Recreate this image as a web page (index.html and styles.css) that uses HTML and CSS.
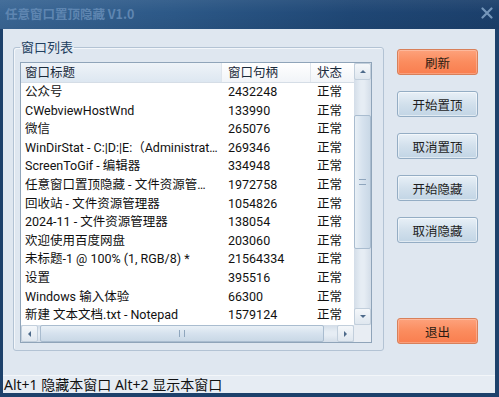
FILE: index.html
```html
<!doctype html>
<html lang="zh-CN">
  <head>
    <meta charset="UTF-8" />
    <title>任意窗口置顶隐藏 V1.0</title>
    <link rel="stylesheet" href="styles.css">
  </head>
  <body>
    <div class="window">
      <div class="titlebar">
        <span class="title">任意窗口置顶隐藏 V1.0</span>
        <svg class="close" width="12" height="12" viewBox="0 0 12 12">
          <path d="M1.5 1.5 L10.5 10.5 M10.5 1.5 L1.5 10.5" stroke="#7596ba" stroke-width="2.2" stroke-linecap="round" />
        </svg>
      </div>

      <div class="client">
        <fieldset class="group">
          <legend>窗口列表</legend>
          <div class="listview">
            <div class="list-main">
              <div class="row header">
                <span class="c1 sorted">窗口标题</span>
                <span class="c2">窗口句柄</span>
                <span class="c3">状态</span>
              </div>
              <div class="row"><span class="c1">公众号</span><span class="c2">2432248</span><span class="c3">正常</span></div>
              <div class="row"><span class="c1">CWebviewHostWnd</span><span class="c2">133990</span><span class="c3">正常</span></div>
              <div class="row"><span class="c1">微信</span><span class="c2">265076</span><span class="c3">正常</span></div>
              <div class="row"><span class="c1">WinDirStat - C:|D:|E:（Administrator）</span><span class="c2">269346</span><span class="c3">正常</span></div>
              <div class="row"><span class="c1">ScreenToGif - 编辑器</span><span class="c2">334948</span><span class="c3">正常</span></div>
              <div class="row"><span class="c1">任意窗口置顶隐藏 - 文件资源管理器</span><span class="c2">1972758</span><span class="c3">正常</span></div>
              <div class="row"><span class="c1">回收站 - 文件资源管理器</span><span class="c2">1054826</span><span class="c3">正常</span></div>
              <div class="row"><span class="c1">2024-11 - 文件资源管理器</span><span class="c2">138054</span><span class="c3">正常</span></div>
              <div class="row"><span class="c1">欢迎使用百度网盘</span><span class="c2">203060</span><span class="c3">正常</span></div>
              <div class="row"><span class="c1">未标题-1 @ 100% (1, RGB/8) *</span><span class="c2">21564334</span><span class="c3">正常</span></div>
              <div class="row"><span class="c1">设置</span><span class="c2">395516</span><span class="c3">正常</span></div>
              <div class="row"><span class="c1">Windows 输入体验</span><span class="c2">66300</span><span class="c3">正常</span></div>
              <div class="row"><span class="c1">新建 文本文档.txt - Notepad</span><span class="c2">1579124</span><span class="c3">正常</span></div>
            </div>

            <div class="vscroll">
              <div class="sbtn"><span class="arrow up"></span></div>
              <div class="track">
                <div class="thumb vthumb"><span class="grip"></span></div>
              </div>
              <div class="sbtn"><span class="arrow down"></span></div>
            </div>

            <div class="hscroll">
              <div class="sbtn"><span class="arrow left"></span></div>
              <div class="track">
                <div class="thumb hthumb"><span class="grip"></span></div>
              </div>
              <div class="sbtn"><span class="arrow right"></span></div>
            </div>
            <div class="corner"></div>
          </div>
        </fieldset>

        <div class="actions">
          <button class="btn orange">刷新</button>
          <button class="btn">开始置顶</button>
          <button class="btn">取消置顶</button>
          <button class="btn">开始隐藏</button>
          <button class="btn">取消隐藏</button>
          <button class="btn orange exit">退出</button>
        </div>
      </div>

      <div class="statusbar">Alt+1 隐藏本窗口 Alt+2 显示本窗口</div>
    </div>
  </body>
</html>
```

FILE: styles.css
```css
body {
  margin: 0;
  padding: 0;
  font-family: "Noto Sans CJK SC", sans-serif;
  font-size: 13px;
  color: #111;
}

.window {
  width: 499px;
  height: 397px;
  background: #1d416b;
  display: flex;
  flex-direction: column;
  overflow: hidden;
}

.titlebar {
  height: 29px;
  flex: none;
  display: flex;
  align-items: center;
  justify-content: space-between;
  padding: 0 6px 0 5px;
  box-sizing: border-box;
  background:
    linear-gradient(to bottom, rgba(255, 255, 255, 0.06), rgba(255, 255, 255, 0) 45%, rgba(0, 0, 0, 0.05)),
    linear-gradient(to right, #3a6694 0%, #2c5887 35%, #1f4775 70%, #1b3f6b 100%);
}

.title {
  font-size: 12.5px;
  font-weight: bold;
  color: #5f86b1;
  line-height: 16px;
  margin-top: -2px;
}

.close {
  display: block;
  margin-top: -3px;
}

.client {
  height: 346px;
  flex: none;
  margin: 0 4px 0 3px;
  background: #dfe7f0;
  display: flex;
  padding: 10px 0 0 10px;
  box-sizing: border-box;
}

/* group box */
.group {
  margin: 0;
  width: 371px;
  height: 312px;
  box-sizing: border-box;
  padding: 0 6px 7px 6px;
  border: 1px solid #b3c3d4;
  border-radius: 3px;
  box-shadow: inset 1px 1px 0 #f3f6fa;
}

.group legend {
  font-size: 13px;
  line-height: 16px;
  color: #22405f;
  padding: 0 1px;
  margin-bottom: 7px;
}

/* list view */
.listview {
  width: 352px;
  height: 281px;
  box-sizing: border-box;
  border: 1px solid #8fa4b9;
  background: #fff;
  display: grid;
  grid-template-columns: 1fr 17px;
  grid-template-rows: 1fr 17px;
  font-family: Roboto, "Noto Sans CJK SC", sans-serif;
  font-size: 12.5px;
}

.list-main {
  overflow: hidden;
}

.row {
  display: flex;
  height: 18.6px;
  line-height: 18.6px;
  white-space: nowrap;
}

.row span {
  flex: none;
  box-sizing: border-box;
  overflow: hidden;
  text-overflow: ellipsis;
}

.c1 {
  width: 201px;
  padding: 0 4px;
}

.c2 {
  width: 89px;
  padding: 0 5px 0 6px;
}

.c3 {
  width: 43px;
  padding: 0 5px 0 6px;
}

.row.header {
  height: 19px;
  line-height: 19px;
  background: linear-gradient(to bottom, #ffffff, #f1f4f8);
  border-bottom: 1px solid #d5dde6;
}

.row.header span {
  border-right: 1px solid #dfe5ec;
  color: #1a2a3a;
}

.row.header .sorted {
  background: linear-gradient(to bottom, #eef3f8, #dde7f1);
}

.row.header .c3 {
  border-right: none;
}

/* scroll bars */
.vscroll,
.hscroll {
  display: flex;
  background: linear-gradient(to right, #d3dde8, #e6edf4 40%, #e6edf4 60%, #d3dde8);
}

.vscroll {
  flex-direction: column;
}

.hscroll {
  background: linear-gradient(to bottom, #d3dde8, #e6edf4 40%, #e6edf4 60%, #d3dde8);
}

.corner {
  background: #e8edf3;
}

.sbtn {
  flex: none;
  width: 17px;
  height: 17px;
  box-sizing: border-box;
  border: 1px solid #c2cfdc;
  border-radius: 2px;
  background: linear-gradient(to bottom, #f4f7fa, #dfe7ef);
  display: flex;
  align-items: center;
  justify-content: center;
}

.track {
  flex: 1;
  display: flex;
}

.vscroll .track {
  flex-direction: column;
}

.thumb {
  box-sizing: border-box;
  border: 1px solid #a9bccf;
  border-radius: 2px;
  display: flex;
  align-items: center;
  justify-content: center;
}

.vthumb {
  margin-top: 35px;
  height: 134px;
  background: linear-gradient(to right, #e9f0f6, #d6e2ee 50%, #c9d8e6);
}

.hthumb {
  margin-left: 2px;
  width: 284px;
  background: linear-gradient(to bottom, #e9f0f6, #d6e2ee 50%, #c9d8e6);
}

.vthumb .grip {
  width: 7px;
  height: 4px;
  border-top: 1px solid #8fa6bd;
  border-bottom: 1px solid #8fa6bd;
}

.hthumb .grip {
  width: 4px;
  height: 7px;
  border-left: 1px solid #8fa6bd;
  border-right: 1px solid #8fa6bd;
}

.arrow {
  width: 0;
  height: 0;
  border: 3px solid transparent;
}

.arrow.up {
  border-bottom: 3px solid #4d6a8a;
  margin-top: -3px;
}

.arrow.down {
  border-top: 3px solid #4d6a8a;
  margin-bottom: -3px;
}

.arrow.left {
  border-right: 3px solid #4d6a8a;
  margin-left: -3px;
}

.arrow.right {
  border-left: 3px solid #4d6a8a;
  margin-right: -3px;
}

/* buttons */
.actions {
  margin-left: 13px;
  padding: 10px 0 31px 0;
  display: flex;
  flex-direction: column;
  gap: 16px;
}

.btn {
  width: 81px;
  height: 26px;
  box-sizing: border-box;
  font-family: "Noto Sans CJK SC", sans-serif;
  font-size: 12.5px;
  color: #1e1e1e;
  border: 1px solid #94adc4;
  border-radius: 3px;
  background: linear-gradient(to bottom, #e8f0f7, #d2e0ec 50%, #c2d5e5);
  box-shadow: inset 0 0 0 1px rgba(255, 255, 255, 0.5);
  padding: 0;
  cursor: pointer;
}

.btn.orange {
  border-color: #d8805a;
  background: linear-gradient(to bottom, #fda27c, #fb8c5e 50%, #f97e4f);
  box-shadow: inset 0 0 0 1px rgba(255, 255, 255, 0.25);
  color: #2a1a12;
}

.btn.exit {
  margin-top: auto;
}

.statusbar {
  height: 18px;
  flex: none;
  margin: 0 4px 0 3px;
  background: #e6ecf3;
  border-top: 1px solid #f3f6f9;
  box-sizing: border-box;
  padding-left: 1px;
  font-family: "Noto Sans", "Noto Sans CJK SC", sans-serif;
  font-size: 14px;
  line-height: 17px;
  color: #111;
  white-space: nowrap;
}
```
